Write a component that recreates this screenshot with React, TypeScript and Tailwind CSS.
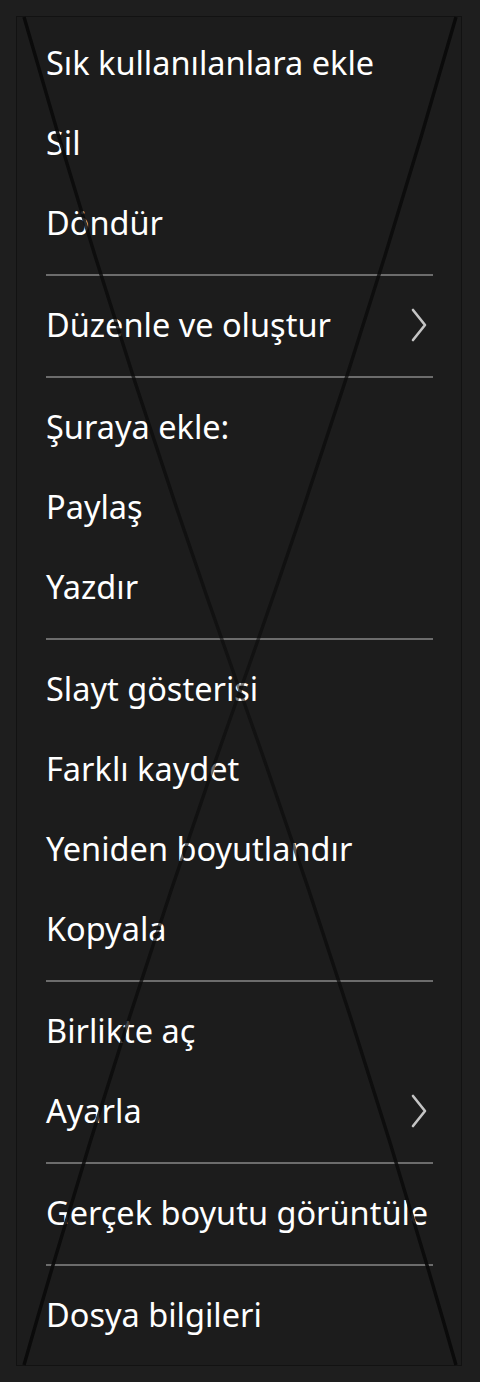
import React from "react";

type Item = { label: string; sub?: boolean } | "sep";

const items: Item[] = [
  { label: "Sık kullanılanlara ekle" },
  { label: "Sil" },
  { label: "Döndür" },
  "sep",
  { label: "Düzenle ve oluştur", sub: true },
  "sep",
  { label: "Şuraya ekle:" },
  { label: "Paylaş" },
  { label: "Yazdır" },
  "sep",
  { label: "Slayt gösterisi" },
  { label: "Farklı kaydet" },
  { label: "Yeniden boyutlandır" },
  { label: "Kopyala" },
  "sep",
  { label: "Birlikte aç" },
  { label: "Ayarla", sub: true },
  "sep",
  { label: "Gerçek boyutu görüntüle" },
  "sep",
  { label: "Dosya bilgileri" },
];

function Chevron() {
  return (
    <svg width="18" height="34" viewBox="0 0 18 34" className="shrink-0">
      <path d="M3 2 L15 17 L3 32" fill="none" stroke="#c4c4c4" strokeWidth="2.6" strokeLinecap="round" strokeLinejoin="round" />
    </svg>
  );
}

export default function App() {
  return (
    <div className="relative w-[480px] h-[1382px] bg-[#1e1e1e] pt-[16px] pl-[16px] overflow-hidden" style={{ fontFamily: '"Noto Sans", "Open Sans", sans-serif' }}>
      <div className="w-[446px] h-[1350px] border border-[#121212] bg-[#1c1c1c] pt-[6px] pb-[8px]">
        {items.map((it, i) =>
          it === "sep" ? (
            <div key={i} className="pt-[11px] pb-[9px] pl-[29px] pr-[28px]">
              <div className="h-[2px] bg-[#6c6c6c]" />
            </div>
          ) : (
            <div key={i} className="h-[80px] flex items-center justify-between pl-[29px] pr-[33px]">
              <span className="text-white text-[32.5px] leading-none whitespace-nowrap">{it.label}</span>
              {it.sub && <Chevron />}
            </div>
          )
        )}
      </div>
      <svg className="absolute inset-0 pointer-events-none" width="480" height="1382" viewBox="0 0 480 1382">
        <defs>
          <linearGradient id="g" x1="0" y1="17" x2="0" y2="1365" gradientUnits="userSpaceOnUse">
            <stop offset="0" stopColor="#0a0a0a" stopOpacity="1" />
            <stop offset="0.5" stopColor="#0a0a0a" stopOpacity="0.55" />
            <stop offset="1" stopColor="#0a0a0a" stopOpacity="1" />
          </linearGradient>
        </defs>
        <path d="M24 17 Q120 354 240 691 Q360 1028 456 1365" stroke="url(#g)" strokeWidth="3.5" fill="none" />
        <path d="M456 17 Q360 354 240 691 Q120 1028 24 1365" stroke="url(#g)" strokeWidth="3.5" fill="none" />
      </svg>
    </div>
  );
}
